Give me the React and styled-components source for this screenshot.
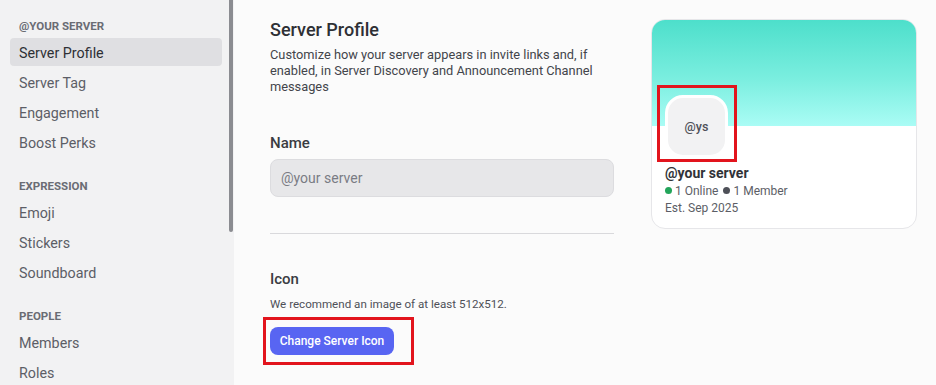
import React from "react";
import styled, { createGlobalStyle } from "styled-components";

const Global = createGlobalStyle`
  html, body { margin: 0; padding: 0; background: #fbfbfb; }
  body { font-family: Roboto, "Noto Sans", sans-serif; -webkit-font-smoothing: antialiased; }
  * { box-sizing: border-box; }
`;

const Page = styled.div`
  display: flex;
  width: 936px;
  height: 385px;
  overflow: hidden;
  background: #fbfbfb;
`;

const Sidebar = styled.aside`
  display: flex;
  width: 234px;
  flex-shrink: 0;
  background: #f2f2f3;
`;

const Nav = styled.nav`
  width: 212px;
  margin-left: 10px;
  padding-top: 18px;
  display: flex;
  flex-direction: column;
`;

const Track = styled.div`
  flex: 1;
  display: flex;
  justify-content: flex-end;
  padding-right: 1px;
`;

const Thumb = styled.div`
  width: 4px;
  height: 232px;
  background: #8b8c91;
  border-radius: 0 0 2px 2px;
`;

const SectionHeader = styled.div`
  height: 16px;
  line-height: 17px;
  padding-left: 9px;
  margin-bottom: 4px;
  font-size: 11.5px;
  font-weight: 700;
  text-transform: uppercase;
  color: #6a6c74;
`;

const Item = styled.div`
  height: 28px;
  padding-top: 2px;
  line-height: 26px;
  margin-bottom: 2px;
  padding-left: 9px;
  border-radius: 4px;
  font-size: 14.3px;
  font-weight: 400;
  color: ${(p) => (p.$active ? "#2e3035" : "#5c5e66")};
  background: ${(p) => (p.$active ? "#dfdfe2" : "transparent")};
`;

const NavDivider = styled.div`
  height: 1px;
  margin: 8px 9px 12px;
  background: #e1e1e4;
`;

const Main = styled.main`
  flex: 1;
  display: flex;
  gap: 37px;
  padding: 18px 0 0 36px;
`;

const Form = styled.section`
  width: 344px;
  display: flex;
  flex-direction: column;
`;

const Title = styled.h1`
  margin: 0;
  height: 24px;
  line-height: 24px;
  font-size: 18px;
  font-weight: 500;
  color: #2e3035;
`;

const Description = styled.p`
  margin: 5px 0 0;
  font-size: 12.8px;
  line-height: 16px;
  color: #43454b;
`;

const Label = styled.div`
  margin-top: ${(p) => p.$top}px;
  height: 20px;
  line-height: 20px;
  font-size: 15px;
  font-weight: 500;
  color: #3a3c42;
`;

const Input = styled.div`
  margin-top: 6px;
  height: 38px;
  padding: 0 10px;
  display: flex;
  align-items: center;
  background: #e7e7e9;
  border: 1px solid #dcdcdf;
  border-radius: 8px;
  font-size: 14px;
  color: #7a7c84;
`;

const Rule = styled.hr`
  margin: 36px 0 0;
  border: none;
  height: 1px;
  background: #d9d9dc;
`;

const Hint = styled.p`
  margin: 7px 0 0;
  font-size: 11.6px;
  line-height: 16px;
  color: #4e5058;
`;

const ButtonWrap = styled.div`
  position: relative;
  align-self: flex-start;
  margin-top: 15px;
`;

const Button = styled.button`
  width: 124px;
  height: 28px;
  padding: 0;
  border: none;
  border-radius: 8px;
  background: #5865f2;
  color: #ffffff;
  font-family: inherit;
  font-size: 12px;
  font-weight: 500;
`;

const Highlight = styled.div`
  position: absolute;
  left: ${(p) => p.$l}px;
  top: ${(p) => p.$t}px;
  width: ${(p) => p.$w}px;
  height: ${(p) => p.$h}px;
  border: 3px solid #e2141d;
  pointer-events: none;
`;

const Card = styled.article`
  margin-top: 1px;
  width: 266px;
  height: 210px;
  background: #ffffff;
  border: 1px solid #e6e6e9;
  border-radius: 14px;
  overflow: hidden;
  display: flex;
  flex-direction: column;
`;

const Banner = styled.div`
  height: 106px;
  flex-shrink: 0;
  background: linear-gradient(180deg, #4ddfcb 0%, #7aeedf 55%, #aafcf5 100%);
`;

const CardBody = styled.div`
  padding: 0 13px;
  display: flex;
  flex-direction: column;
`;

const AvatarWrap = styled.div`
  position: relative;
  margin-top: -31px;
  align-self: flex-start;
`;

const Avatar = styled.div`
  width: 63px;
  height: 63px;
  border: 3px solid #ffffff;
  border-radius: 18px;
  background: #f2f2f3;
  display: flex;
  align-items: center;
  justify-content: center;
  font-size: 12.5px;
  font-weight: 500;
  color: #4e5058;
`;

const ServerName = styled.div`
  margin-top: 6px;
  height: 18px;
  line-height: 18px;
  font-size: 14px;
  font-weight: 700;
  color: #313338;
`;

const Meta = styled.div`
  display: flex;
  align-items: center;
  gap: 3px;
  height: 17px;
  font-size: 12px;
  color: #5c5e66;
`;

const Dot = styled.span`
  width: 7px;
  height: 7px;
  border-radius: 50%;
  background: ${(p) => p.$color};
  margin-left: ${(p) => p.$gap || 0}px;
`;

const sections = [
  { title: "@your server", items: ["Server Profile", "Server Tag", "Engagement", "Boost Perks"] },
  { title: "Expression", items: ["Emoji", "Stickers", "Soundboard"] },
  { title: "People", items: ["Members", "Roles"] },
];

export default function App() {
  return (
    <>
      <Global />
      <Page>
        <Sidebar>
          <Nav>
            {sections.map((s, i) => (
              <React.Fragment key={s.title}>
                {i > 0 && <NavDivider />}
                <SectionHeader>{s.title}</SectionHeader>
                {s.items.map((it) => (
                  <Item key={it} $active={it === "Server Profile"}>{it}</Item>
                ))}
              </React.Fragment>
            ))}
          </Nav>
          <Track>
            <Thumb />
          </Track>
        </Sidebar>
        <Main>
          <Form>
            <Title>Server Profile</Title>
            <Description>
              Customize how your server appears in invite links and, if enabled, in Server Discovery and Announcement Channel messages
            </Description>
            <Label $top={38}>Name</Label>
            <Input>@your server</Input>
            <Rule />
            <Label $top={35}>Icon</Label>
            <Hint>We recommend an image of at least 512x512.</Hint>
            <ButtonWrap>
              <Button>Change Server Icon</Button>
              <Highlight $l={-7} $t={-10} $w={151} $h={48} />
            </ButtonWrap>
          </Form>
          <Card>
            <Banner />
            <CardBody>
              <AvatarWrap>
                <Avatar>@ys</Avatar>
                <Highlight $l={-8} $t={-10} $w={80} $h={77} />
              </AvatarWrap>
              <ServerName>@your server</ServerName>
              <Meta>
                <Dot $color="#23a55a" />
                <span>1 Online</span>
                <Dot $color="#4e5058" $gap={2} />
                <span>1 Member</span>
              </Meta>
              <Meta>Est. Sep 2025</Meta>
            </CardBody>
          </Card>
        </Main>
      </Page>
    </>
  );
}
